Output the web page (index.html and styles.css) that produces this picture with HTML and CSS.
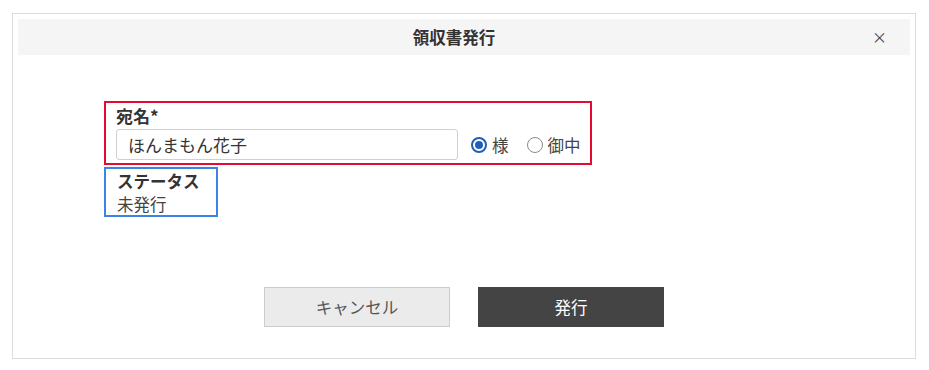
FILE: index.html
```html
<!DOCTYPE html>
<html lang="ja">
<head>
<meta charset="utf-8">
<title>領収書発行</title>
<link rel="stylesheet" href="styles.css">
</head>
<body>
<div class="dialog">
  <div class="dialog-header">
    <span class="dialog-title">領収書発行</span>
    <span class="dialog-close">×</span>
  </div>
  <div class="dialog-body">
    <div class="field field-name">
      <div class="field-label">宛名*</div>
      <div class="field-row">
        <input class="text-input" type="text" value="ほんまもん花子">
        <label class="radio"><span class="radio-mark checked"></span><span>様</span></label>
        <label class="radio"><span class="radio-mark"></span><span>御中</span></label>
      </div>
    </div>
    <div class="field field-status">
      <div class="field-label">ステータス</div>
      <div class="field-value">未発行</div>
    </div>
  </div>
  <div class="dialog-actions">
    <button class="btn btn-cancel">キャンセル</button>
    <button class="btn btn-primary">発行</button>
  </div>
</div>
</body>
</html>
```
FILE: styles.css
```css
html, body {
  margin: 0;
  padding: 0;
  background: #fff;
}
body {
  font-family: "Noto Sans CJK JP", "Noto Sans", sans-serif;
  color: #333;
}
.dialog {
  box-sizing: border-box;
  margin: 13px 0 0 12px;
  width: 904px;
  height: 346px;
  border: 1px solid #dcdcdc;
  padding: 5px;
  display: flex;
  flex-direction: column;
}
.dialog-header {
  height: 36px;
  background: #f5f5f5;
  display: flex;
  align-items: center;
  justify-content: center;
  padding-right: 20px;
  position: relative;
}
.dialog-title {
  font-size: 16.5px;
  font-weight: bold;
  color: #333;
}
.dialog-close {
  position: absolute;
  right: 23px;
  top: 8px;
  font-size: 15px;
  line-height: 20px;
  color: #444;
}
.dialog-body {
  margin-top: 46px;
  padding-left: 86px;
  display: flex;
  flex-direction: column;
  align-items: flex-start;
}
.field {
  box-sizing: border-box;
  padding: 0 10px;
}
.field-name {
  width: 488px;
  height: 64px;
  border: 2px solid #e60a32;
  padding-right: 0;
}
.field-status {
  margin-top: 2px;
  width: 114px;
  height: 50px;
  border: 2px solid #3a85e3;
  padding-left: 11px;
}
.field-label {
  font-size: 17px;
  font-weight: bold;
  line-height: 26px;
  color: #333;
  white-space: nowrap;
}
.field-status .field-label {
  line-height: 24px;
  font-size: 16.5px;
}
.field-value {
  font-size: 16.5px;
  line-height: 22px;
  color: #444;
  white-space: nowrap;
}
.field-row {
  display: flex;
  align-items: center;
}
.text-input {
  flex: none;
  box-sizing: border-box;
  width: 342px;
  height: 31px;
  border: 1px solid #d0d0d0;
  border-radius: 3px;
  padding: 0 11px;
  font-family: inherit;
  font-size: 17px;
  color: #333;
  background: #fff;
  outline: none;
}
.radio {
  flex: none;
  display: flex;
  align-items: center;
  font-size: 16.5px;
  color: #444;
  white-space: nowrap;
}
.radio:first-of-type {
  margin-left: 13px;
}
.radio + .radio {
  margin-left: 18px;
}
.radio-mark {
  flex: none;
  box-sizing: border-box;
  width: 16px;
  height: 16px;
  border: 1.5px solid #8a8a8a;
  border-radius: 50%;
  margin-right: 5px;
  display: flex;
  align-items: center;
  justify-content: center;
}
.radio-mark.checked {
  border: 2px solid #1f5fb8;
}
.radio-mark.checked::after {
  content: "";
  width: 8px;
  height: 8px;
  border-radius: 50%;
  background: #1f5fb8;
}
.dialog-actions {
  margin-top: 70px;
  display: flex;
  justify-content: center;
  gap: 28px;
}
.btn {
  box-sizing: border-box;
  width: 186px;
  height: 40px;
  font-family: inherit;
  font-size: 16.5px;
  border-radius: 0;
  cursor: pointer;
}
.btn-cancel {
  background: #ebebeb;
  border: 1px solid #cccccc;
  color: #555;
}
.btn-primary {
  background: #444444;
  border: 1px solid #444444;
  color: #fff;
}
```
